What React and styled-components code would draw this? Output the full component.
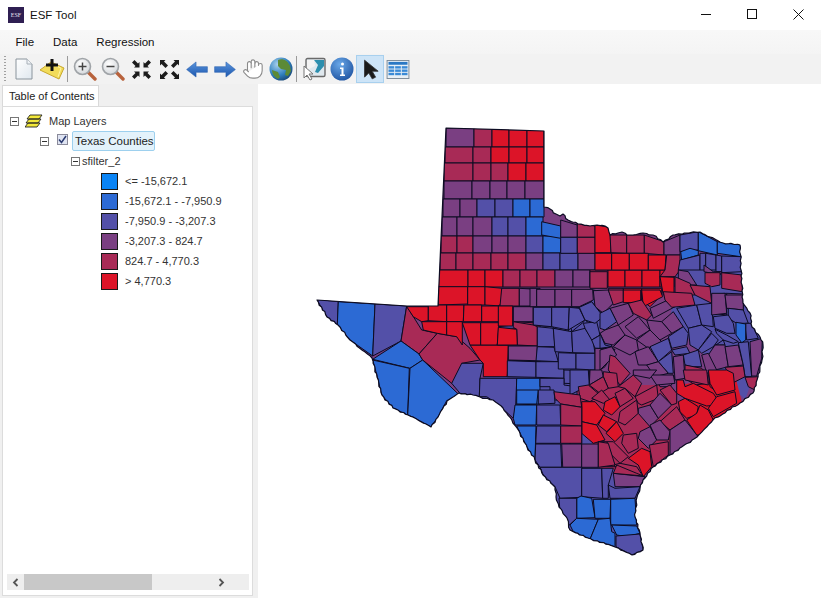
import React from "react";
import styled, { createGlobalStyle } from "styled-components";
import { Hand } from "lucide-react";

const C1 = "#0a84f5";
const C2 = "#2c6ad4";
const C3 = "#5350a8";
const C4 = "#7a3f82";
const C5 = "#a82a56";
const C6 = "#dc1428";

const legend = [
  [C1, "<= -15,672.1"],
  [C2, "-15,672.1 - -7,950.9"],
  [C3, "-7,950.9 - -3,207.3"],
  [C4, "-3,207.3 - 824.7"],
  [C5, "824.7 - 4,770.3"],
  [C6, "> 4,770.3"],
];

const TEXAS_STRAIGHT = "438,306 446,128 544,131 544,207";
const TEXAS_RIVER =
  "544,207 550,209 556,214 560,216 563,214 568,220 578,224 590,226 597,225 605,226 608,228 610,235 618,233 622,232 627,235 633,235 643,233 653,235 663,242 673,235 687,233 700,232 710,237 723,243 740,245 741,270 743,303 750,313 752,327 760,337 763,345 762,360 757,380 753,393 740,403 713,420 697,437 670,455 653,467 645,478 643,480 637,497 635,517 640,533 643,550 632,555 615,547 588,538 570,530 567,518 559,507 556,497 555,487 543,475 535,460 527,447 517,428 503,408 493,400 480,397 473,395 459,393 447,401 438,417 431,427 418,420 408,415 393,408 382,395 377,377 372,358 350,340 338,325 327,317 317,300";

// small deterministic wobble, the river and coast edges aren't smooth in the map
function roughen(str) {
  const pts = str.split(" ").map((p) => p.split(",").map(Number));
  const out = [];
  let n = 0;
  for (let i = 0; i < pts.length - 1; i++) {
    const [x0, y0] = pts[i];
    const [x1, y1] = pts[i + 1];
    const steps = Math.max(1, Math.round(Math.hypot(x1 - x0, y1 - y0) / 3));
    for (let s = 0; s < steps; s++) {
      const t = s / steps;
      n++;
      const w = s === 0 ? 0 : ((n * 7) % 5) / 3 - 0.65;
      const v = s === 0 ? 0 : ((n * 11) % 7) / 5 - 0.6;
      out.push(`${(x0 + (x1 - x0) * t + w).toFixed(1)},${(y0 + (y1 - y0) * t + v).toFixed(1)}`);
    }
  }
  return out.join(" ");
}

const TEXAS = `${TEXAS_STRAIGHT} ${roughen(TEXAS_RIVER)} 317,300 407,306`;

// fills under the counties so small gaps keep the colour of their area
const underlays = [
  [C3, "500,300 600,300 600,400 480,400"],
  [C3, "680,255 745,255 745,300 765,345 745,400 700,350 670,320"],
  [C3, "505,400 640,400 650,560 560,530"],
  [C5, "575,385 660,385 700,420 650,470 600,470"],
  [C6, "680,385 735,375 742,403 700,430"],
];

// straight county rows: top y, bottom y, column edges, colours
const rows = [
  [128, 147, [446, 474, 492, 509, 527, 544], [C4, C5, C6, C6, C6]],
  [147, 163, [445, 473, 491, 509, 527, 544], [C5, C5, C6, C6, C6]],
  [163, 181, [444, 473, 491, 508, 526, 544], [C5, C5, C5, C6, C6]],
  [181, 199, [444, 472, 490, 507, 525, 544], [C4, C4, C4, C4, C4]],
  [199, 217, [443, 460, 477, 495, 513, 530, 544], [C4, C4, C3, C3, C2, C2]],
  [217, 236, [442, 457, 473, 492, 508, 526, 543], [C4, C4, C4, C3, C3, C2]],
  [236, 253, [441, 457, 473, 492, 508, 526, 543, 561, 577, 595], [C5, C5, C4, C4, C4, C3, C2, C3, C5]],
  [253, 270, [440, 456, 473, 491, 508, 526, 543, 560, 578, 595], [C5, C5, C5, C5, C5, C4, C3, C3, C4]],
  [270, 287, [438, 468, 485, 503, 520, 537, 555, 573, 590, 608, 625, 642, 660, 674], [C6, C6, C6, C5, C5, C5, C4, C4, C5, C6, C6, C6, C6]],
];

// counties traced from the map, coords given in a 3x crop with origin ox, oy
const zones = [
  {
    ox: 300,
    oy: 280,
    polys: [
      [C3, "50,58 115,65 112,135 80,110"],
      [C2, "115,65 225,72 218,228 150,180 112,135"],
      [C3, "225,72 320,78 303,183 218,228"],
      [C5, "320,78 365,150 412,160 357,222 303,183"],
      [C2, "303,183 357,222 368,240 330,265 218,238"],
      [C2, "218,240 328,265 323,405 280,385 245,345 232,290"],
      [C2, "330,265 368,240 478,345 440,362 415,410 392,440 355,420 323,405"],
      [C5, "412,160 470,170 510,205 540,240 485,250 480,285 455,310 368,240 357,222"],
      [C3, "485,250 550,250 540,295 538,350 480,340 455,310"],
      [C3, "540,295 650,295 648,375 640,415 590,370 560,350 538,350"],
      [C2, "650,295 720,295 720,372 648,375"],
      [C6, "510,195 625,195 622,290 550,290 550,250 540,240"],
      [C6, "415,20 503,20 503,72 415,75"],
      [C6, "503,20 555,20 555,75 503,75"],
      [C6, "555,20 607,25 605,78 555,75"],
      [C5, "607,25 660,25 660,78 605,78"],
      [C4, "660,25 720,25 720,80 660,78"],
      [C6, "320,80 385,80 385,122 365,125 340,110"],
      [C6, "385,75 440,75 440,125 385,122"],
      [C6, "440,75 492,75 490,125 440,125"],
      [C6, "492,75 545,75 545,125 490,125"],
      [C6, "545,78 597,78 597,125 545,125"],
      [C6, "597,75 640,75 638,135 597,140"],
      [C4, "640,80 700,80 700,125 640,125"],
      [C6, "365,125 440,125 440,165 412,160 370,150"],
      [C6, "440,125 487,125 487,195 470,170 440,165"],
      [C6, "487,128 542,128 542,195 510,195"],
      [C6, "542,128 597,128 592,195 542,195"],
      [C6, "597,145 652,145 652,195 592,195"],
      [C5, "652,125 720,130 720,200 652,195"],
      [C4, "628,198 720,200 720,245 625,240"],
      [C3, "625,243 720,245 720,290 622,290"],
    ],
  },
  {
    ox: 490,
    oy: 270,
    polys: [
      [C5, "35,55 88,55 88,108 30,108"],
      [C4, "88,55 140,58 140,108 88,108"],
      [C4, "140,58 195,60 195,108 140,108"],
      [C4, "195,60 245,60 245,110 195,108"],
      [C4, "245,60 310,60 300,90 265,112 245,110"],
      [C4, "310,60 360,70 365,105 335,125"],
      [C6, "25,108 68,108 68,168 25,168"],
      [C4, "70,110 130,110 130,155 70,155"],
      [C3, "130,110 185,110 185,170 130,165"],
      [C3, "185,110 235,110 235,185 190,175"],
      [C3, "235,112 270,112 282,155 245,185"],
      [C3, "265,115 300,90 335,130 290,155"],
      [C5, "70,155 130,165 142,170 142,228 82,225 80,178 70,172"],
      [C6, "25,172 80,178 82,225 22,225"],
      [C4, "55,228 142,228 140,272 55,270"],
      [C3, "52,272 138,275 138,322 52,320"],
      [C3, "142,170 190,175 195,230 142,230"],
      [C3, "142,230 192,232 205,275 138,272"],
      [C3, "138,275 205,275 222,300 222,325 138,322"],
      [C3, "190,175 245,185 248,248 195,245"],
      [C3, "245,185 285,175 310,215 315,250 248,248"],
      [C3, "205,248 258,250 258,297 205,297"],
      [C3, "258,250 315,250 315,300 258,297"],
      [C3, "222,300 298,302 298,343 222,340"],
      [C3, "150,325 222,325 222,345 260,350 262,390 180,390 180,350 150,350"],
      [C3, "280,160 320,155 330,195 305,210 285,175"],
      [C3, "305,210 340,190 370,235 315,235"],
      [C4, "315,235 375,238 345,290 315,310"],
      [C4, "298,302 335,305 320,350 298,343"],
    ],
  },
  {
    ox: 530,
    oy: 220,
    polys: [
      [C2, "35,5 92,18 92,55 35,45"],
      [C4, "92,0 142,15 142,52 92,52"],
      [C5, "142,10 195,18 195,52 142,52"],
      [C3, "92,52 142,52 142,100 92,100"],
      [C5, "142,52 195,52 195,100 142,100"],
      [C6, "195,15 240,22 243,98 195,98"],
      [C5, "240,45 290,45 290,100 243,98"],
      [C5, "290,45 343,45 343,100 290,100"],
      [C5, "343,45 402,65 402,105 343,100"],
      [C4, "402,65 450,45 450,105 402,105"],
      [C3, "450,45 505,35 505,90 450,95"],
      [C2, "505,35 562,65 562,105 505,92"],
      [C2, "562,65 635,75 632,110 562,100"],
      [C2, "452,95 480,85 505,92 505,105 455,120"],
      [C6, "195,100 245,100 245,150 195,150"],
      [C6, "245,100 298,100 298,150 245,150"],
      [C6, "298,100 355,100 355,150 298,150"],
      [C6, "355,105 408,105 405,150 355,150"],
      [C5, "410,105 450,105 450,150 435,170 390,170 405,150"],
      [C3, "450,120 510,105 510,150 445,150"],
      [C3, "510,100 527,100 527,150 510,150"],
      [C3, "527,100 558,105 558,150 527,150"],
      [C3, "558,105 575,108 575,155 558,155"],
      [C3, "575,108 635,110 635,155 575,158"],
      [C4, "445,150 475,155 500,195 480,195 445,175"],
      [C4, "522,135 550,155 575,155 570,165 522,155"],
      [C5, "525,158 570,158 570,195 545,200 525,190"],
      [C5, "575,158 637,165 637,215 575,205"],
      [C5, "435,170 480,190 495,225 435,225"],
      [C5, "480,195 540,200 545,250 495,225"],
      [C4, "545,222 590,220 590,285 548,280"],
      [C4, "590,220 640,222 640,265 590,262"],
      [C6, "390,170 432,172 432,225 400,225"],
      [C5, "235,205 280,205 280,235 250,250"],
      [C6, "280,205 335,205 335,240 285,248"],
      [C6, "335,205 395,205 395,225 360,260 335,240"],
      [C4, "190,212 235,210 250,250 220,280 195,260"],
      [C4, "0,205 20,205 20,260 0,260"],
      [C4, "20,208 75,208 75,260 20,260"],
      [C4, "75,208 125,208 125,260 75,260"],
      [C4, "125,208 188,208 190,240 148,260 125,260"],
      [C5, "180,155 232,155 232,205 180,205"],
      [C3, "10,262 65,262 65,320 10,315"],
      [C3, "65,262 118,262 115,330 65,320"],
      [C3, "118,262 148,265 165,300 115,330"],
      [C3, "148,262 185,245 220,290 195,310 165,300"],
    ],
  },
  {
    ox: 600,
    oy: 290,
    polys: [
      [C5, "25,0 70,0 70,35 40,45"],
      [C4, "30,55 85,40 100,75 55,105"],
      [C3, "0,70 30,55 50,95 15,120 0,115"],
      [C4, "15,120 55,105 75,135 40,165 15,160 0,130"],
      [C4, "75,110 115,80 150,120 110,145"],
      [C4, "40,170 75,135 110,150 115,180 90,195"],
      [C4, "110,150 150,120 185,155 145,175"],
      [C3, "0,130 15,165 35,170 0,175"],
      [C4, "0,180 35,170 50,195 25,215 0,240"],
      [C6, "70,0 122,0 122,38 70,38"],
      [C6, "125,0 180,0 188,20 130,50"],
      [C5, "85,40 125,30 155,75 140,90 100,70"],
      [C4, "150,55 215,25 225,50 160,85"],
      [C4, "185,95 220,65 250,110 215,130"],
      [C4, "140,90 185,95 215,130 180,150 150,120"],
      [C5, "190,5 275,10 285,45 215,52 195,30"],
      [C3, "230,55 290,45 305,105 265,115"],
      [C3, "290,45 335,40 340,110 305,105"],
      [C4, "335,10 375,10 380,70 335,75"],
      [C4, "375,15 430,15 430,60 380,55"],
      [C3, "385,55 430,60 445,100 410,100 385,85"],
      [C3, "340,80 385,75 400,100 405,130 380,130 345,115"],
      [C3, "437,100 455,100 475,145 440,150 437,120"],
      [C3, "345,118 380,135 415,155 400,160 370,150 350,130"],
      [C3, "265,115 305,105 335,125 295,180 270,165"],
      [C3, "205,140 250,110 265,130 260,165 215,175"],
      [C3, "150,170 205,145 215,180 175,215"],
      [C4, "105,185 145,170 175,215 145,225 115,225"],
      [C3, "215,180 260,170 270,190 225,195"],
      [C3, "175,215 215,185 220,250 205,250"],
      [C4, "220,200 250,195 252,225 255,265 225,270"],
      [C3, "250,195 295,180 305,230 275,230 255,225"],
      [C3, "295,180 335,130 355,150 340,170 305,190"],
      [C3, "340,170 370,150 375,165 345,165"],
      [C4, "325,195 345,165 375,165 385,230 345,240"],
      [C4, "375,170 415,165 430,225 385,230"],
      [C3, "415,158 445,155 455,260 435,260 430,225"],
      [C4, "450,155 487,145 485,205 470,258 455,258"],
      [C4, "305,195 325,190 350,240 320,250"],
      [C5, "255,225 305,235 320,250 325,280 285,285 255,265"],
      [C6, "325,250 385,240 400,275 350,305 330,290"],
      [C5, "375,232 430,228 435,260 400,278"],
      [C5, "435,262 475,260 465,300 445,290"],
      [C2, "408,97 437,102 437,150 425,158 408,135"],
      [C4, "140,225 175,215 205,250 165,260"],
      [C4, "165,260 220,255 225,270 210,290 180,290"],
      [C5, "30,195 45,200 90,250 60,285 25,240"],
    ],
  },
  {
    ox: 570,
    oy: 370,
    polys: [
      [C3, "0,0 55,0 58,45 0,75"],
      [C5, "25,50 55,45 90,75 60,95 30,85"],
      [C4, "60,0 95,0 100,20 58,45"],
      [C5, "100,5 140,10 145,50 115,55 100,20"],
      [C5, "58,45 100,20 115,55 90,70"],
      [C5, "65,85 95,60 120,90 100,100"],
      [C6, "105,95 135,80 150,110 125,135 100,120"],
      [C6, "35,95 75,95 105,130 80,165 35,155"],
      [C6, "35,155 80,165 105,210 70,220 35,190"],
      [C6, "85,165 100,135 140,155 110,185"],
      [C6, "108,190 140,155 160,190 135,215"],
      [C5, "135,70 165,55 190,85 150,110"],
      [C5, "145,50 190,15 215,40 195,80 165,55"],
      [C5, "150,125 200,90 205,130 165,165 145,155"],
      [C5, "195,80 260,45 265,85 215,105 205,100"],
      [C4, "205,115 240,105 265,145 240,170 205,130"],
      [C4, "240,105 270,70 305,105 265,145"],
      [C5, "270,60 300,45 320,70 320,100 305,105"],
      [C5, "270,155 320,110 345,150 300,180"],
      [C4, "210,185 240,170 260,210 235,235 205,205"],
      [C4, "240,165 270,150 300,185 295,210 260,210"],
      [C4, "300,180 345,150 385,200 300,255"],
      [C6, "325,95 345,85 385,110 380,135 350,145 330,125"],
      [C6, "380,130 390,105 415,120 430,150 410,195 380,195 350,150"],
      [C6, "320,30 340,30 345,50 370,40 430,70 440,85 440,105 410,108 345,85 320,70"],
      [C6, "415,0 470,0 490,10 495,60 440,75 420,40"],
      [C6, "440,80 495,65 500,100 430,140 415,115"],
      [C5, "160,195 200,190 205,235 175,250 155,220"],
      [C5, "110,215 130,215 175,260 150,280 125,255"],
      [C6, "175,265 215,235 240,245 245,290 220,320 205,285"],
      [C5, "238,225 295,215 295,255 250,290"],
      [C5, "130,285 150,280 200,290 220,320 170,315"],
      [C5, "85,215 110,215 125,260 135,290 85,290"],
      [C5, "0,100 35,100 35,170 0,170"],
      [C4, "0,170 35,170 35,225 0,225"],
      [C5, "340,0 410,0 415,45 345,30"],
      [C4, "240,15 310,15 315,40 260,45"],
      [C4, "190,0 260,0 240,25 190,15"],
    ],
  },
  {
    ox: 480,
    oy: 390,
    polys: [
      [C2, "110,0 175,0 170,42 110,42"],
      [C2, "105,45 170,45 168,105 105,105 100,85"],
      [C2, "110,108 168,108 165,210 140,170"],
      [C3, "175,0 222,0 225,40 175,42"],
      [C3, "170,45 240,45 242,105 170,105"],
      [C3, "170,108 242,108 242,160 167,160"],
      [C3, "167,162 242,162 245,232 180,232 165,210"],
      [C5, "222,5 300,15 305,52 242,42 225,25"],
      [C5, "242,42 305,52 305,108 242,105"],
      [C5, "242,108 305,108 305,160 242,160"],
      [C4, "245,162 305,162 305,232 248,232"],
      [C4, "305,162 355,162 355,232 305,232"],
      [C5, "355,155 385,160 405,225 355,232"],
      [C3, "180,232 305,232 305,322 240,325 225,290 190,255"],
      [C3, "305,235 365,235 368,325 305,320"],
      [C3, "365,235 400,235 385,285 385,325 368,325"],
      [C4, "400,250 495,260 480,290 405,290"],
      [C3, "385,285 405,295 480,290 465,325 390,325"],
      [C5, "410,225 470,250 490,258 400,250"],
      [C2, "303,318 335,325 345,383 290,385 290,325"],
      [C2, "340,328 392,328 390,385 345,385"],
      [C2, "392,328 465,325 470,405 392,405"],
      [C3, "237,325 290,325 290,385 268,405 240,365"],
      [C2, "270,405 290,385 355,388 330,448 280,425"],
      [C2, "355,388 390,385 395,425 405,430 405,470 330,448"],
      [C2, "395,405 470,408 480,430 440,440 410,435"],
      [C3, "408,438 480,432 490,480 455,495 408,470"],
    ],
  },
];

function rowPolys() {
  const out = [];
  rows.forEach(([y0, y1, xs, cols]) => {
    cols.forEach((c, i) => {
      out.push([c, `${xs[i]},${y0} ${xs[i + 1]},${y0} ${xs[i + 1]},${y1} ${xs[i]},${y1}`]);
    });
  });
  return out;
}

function zonePolys() {
  const out = [];
  zones.forEach(({ ox, oy, polys }) => {
    polys.forEach(([c, pts]) => {
      const real = pts
        .split(" ")
        .map((p) => {
          const [x, y] = p.split(",").map(Number);
          return `${(ox + x / 3).toFixed(1)},${(oy + y / 3).toFixed(1)}`;
        })
        .join(" ");
      out.push([c, real]);
    });
  });
  return out;
}

const counties = [...rowPolys(), ...zonePolys()];

const GlobalStyle = createGlobalStyle`
  html, body {
    margin: 0;
    height: 100%;
    background: #fff;
    overflow: hidden;
  }
  body {
    font-family: "Liberation Sans", Arial, sans-serif;
    font-size: 11px;
    color: #222;
  }
`;

const Win = styled.div`
  width: 821px;
  height: 598px;
  display: flex;
  flex-direction: column;
  background: #fff;
`;

const TitleBar = styled.div`
  height: 30px;
  display: flex;
  align-items: center;
  padding-left: 8px;
  background: #fff;
`;

const AppIcon = styled.span`
  width: 16px;
  height: 16px;
  margin-top: -1px;
  background: #2f1f52;
  color: #e8e0f0;
  font-family: "Liberation Serif", serif;
  font-size: 6px;
  line-height: 16px;
  text-align: center;
`;

const Title = styled.span`
  margin-left: 6px;
  margin-top: -1px;
  font-size: 11.5px;
  color: #111;
`;

const WinControls = styled.div`
  margin-left: auto;
  display: flex;
`;

const WinBtn = styled.div`
  width: 46px;
  height: 30px;
  display: flex;
  align-items: center;
  justify-content: center;
  margin-top: -2px;
`;

const MenuBar = styled.div`
  height: 24px;
  display: flex;
  align-items: center;
  padding-left: 6px;
  background: linear-gradient(#f8f8f8, #f4f4f4);
`;

const MenuItem = styled.span`
  padding: 0 9.5px;
  font-size: 11.5px;
  color: #111;
`;

const Toolbar = styled.div`
  height: 30px;
  display: flex;
  align-items: center;
  padding-left: 4px;
  background: #f2f2f2;
`;

const Grip = styled.div`
  width: 2px;
  height: 26px;
  margin-right: 4px;
  background: repeating-linear-gradient(#a0a0a0 0 1px, transparent 1px 3px);
`;

const ToolBtn = styled.div`
  width: 28px;
  height: 28px;
  box-sizing: border-box;
  display: flex;
  align-items: center;
  justify-content: center;
  background: ${(p) => (p.$active ? "#cde4f7" : "transparent")};
  border: 1px solid ${(p) => (p.$active ? "#a8d0ee" : "transparent")};
`;

const Sep = styled.div`
  width: 1px;
  height: 26px;
  margin: 0 3px 0 1px;
  background: #9a9a9a;
`;

const Body = styled.div`
  flex: 1;
  min-height: 0;
  display: flex;
`;

const Side = styled.div`
  width: 258px;
  display: flex;
  flex-direction: column;
  background: #f0f0f0;
  padding-bottom: 2px;
  box-sizing: border-box;
`;

const TabStrip = styled.div`
  height: 21px;
  padding-top: 1px;
  padding-left: 2px;
  display: flex;
`;

const Tab = styled.div`
  width: 97px;
  background: #fff;
  border: 1px solid #d9d9d9;
  border-bottom: none;
  box-sizing: border-box;
  padding-left: 6px;
  line-height: 20px;
  font-size: 11px;
  white-space: nowrap;
  color: #222;
`;

const TabBody = styled.div`
  flex: 1;
  margin: 0 5px 0 2px;
  background: #fff;
  border: 1px solid #dcdcdc;
  display: flex;
  flex-direction: column;
  padding-top: 4px;
`;

const Tree = styled.div`
  flex: 1;
`;

const Row = styled.div`
  height: 20px;
  display: flex;
  align-items: center;
  padding-left: ${(p) => p.$indent}px;
  font-size: 11px;
  color: #333;
`;

const Expander = styled.span`
  width: 9px;
  height: 9px;
  box-sizing: border-box;
  border: 1px solid #777;
  background: #fff;
  position: relative;
  margin-right: ${(p) => p.$gap}px;
  &::after {
    content: "";
    position: absolute;
    left: 1px;
    right: 1px;
    top: 3px;
    height: 1px;
    background: #333;
  }
`;

const LayersLabel = styled.span`
  margin-left: 6px;
`;

const Check = styled.span`
  width: 11px;
  height: 11px;
  box-sizing: border-box;
  border: 1px solid #8a8a9a;
  background: #dfe4f2;
  display: flex;
  align-items: center;
  justify-content: center;
  margin-right: 4px;
  margin-top: -4px;
`;

const Selected = styled.span`
  height: 20px;
  width: 83px;
  line-height: 19px;
  box-sizing: border-box;
  padding-left: 2px;
  white-space: nowrap;
  background: #e3f2fb;
  border: 1px solid #9dd0ee;
  border-radius: 2px;
  color: #222;
  font-size: 11.5px;
`;

const Swatch = styled.span`
  width: 17px;
  height: 17px;
  box-sizing: border-box;
  border: 1px solid #1a1a1a;
  background: ${(p) => p.$color};
  margin-right: 7px;
`;

const HScroll = styled.div`
  height: 16px;
  margin: 0 3px 5px 4px;
  background: #eeeeee;
  display: flex;
  align-items: center;
`;

const ScrollArrow = styled.span`
  width: 17px;
  display: flex;
  justify-content: center;
`;

const Thumb = styled.span`
  width: 128px;
  height: 16px;
  background: #c8c8c8;
`;

const ScrollGap = styled.span`
  flex: 1;
`;

const ScrollEnd = styled.span`
  width: 19px;
`;

const MapPane = styled.div`
  flex: 1;
  background: #fff;
  padding: 36px 0 0 52px;
`;

const MapSvg = styled.svg`
  display: block;
`;

const DocIcon = () => (
  <svg width="18" height="22" viewBox="0 0 18 22">
    <defs>
      <linearGradient id="dg" x1="0" y1="0" x2="1" y2="1">
        <stop offset="0" stopColor="#fff" />
        <stop offset="1" stopColor="#dfe7ee" />
      </linearGradient>
    </defs>
    <path d="M1 1h11l5 5v15H1z" fill="url(#dg)" stroke="#8a949c" />
    <path d="M12 1v5h5" fill="#eef2f6" stroke="#a8b0b8" />
  </svg>
);

const AddIcon = () => (
  <svg width="26" height="22" viewBox="0 0 26 22">
    <path d="M1 12 12 4l13 6-5 11z" fill="#f2dc5a" stroke="#c9a92e" />
    <path d="M12 6 22 10l-3 9" fill="none" stroke="#fff3a0" />
    <path d="M13 1v12M7 7h12" stroke="#111" strokeWidth="3" />
  </svg>
);

const MagIcon = ({ plus }) => (
  <svg width="24" height="24" viewBox="0 0 24 24">
    <defs>
      <radialGradient id="mg" cx="0.4" cy="0.35" r="0.7">
        <stop offset="0" stopColor="#fff" />
        <stop offset="1" stopColor="#d2d6da" />
      </radialGradient>
    </defs>
    <path d="M14 14 22 22" stroke="#b8623c" strokeWidth="3.4" strokeLinecap="round" />
    <circle cx="9.5" cy="9.5" r="8" fill="url(#mg)" stroke="#a0a4a8" strokeWidth="1.6" />
    <path d="M5.5 9.5h8" stroke="#444" strokeWidth="1.5" />
    {plus && <path d="M9.5 5.5v8" stroke="#444" strokeWidth="1.5" />}
  </svg>
);

const ExtentIcon = ({ out }) => {
  // one thin arrow for the top left corner, turned for the other three
  const head = out
    ? "M1 1h5.5L5 2.5 9 6.5 6.500 9 2.500 5 1 6.500z"
    : "M8.500 8.500H3L4.500 7 1 3.500 3.500 1 7 4.500 8.500 3z";
  return (
    <svg width="21" height="21" viewBox="0 0 21 21">
      {[
        [0, 0, 0],
        [21, 0, 90],
        [21, 21, 180],
        [0, 21, 270],
      ].map(([x, y, r]) => (
        <path key={r} d={head} fill="#1c1c1c" transform={`translate(${x} ${y}) rotate(${r})`} />
      ))}
    </svg>
  );
};

const ArrowIcon = ({ flip }) => (
  <svg width="24" height="17" viewBox="0 0 24 18">
    <defs>
      <linearGradient id="ag" x1="0" y1="0" x2="0" y2="1">
        <stop offset="0" stopColor="#5b95dd" />
        <stop offset="1" stopColor="#1b56ae" />
      </linearGradient>
    </defs>
    <path
      d="M1 9 11 1v5h12v6H11v5z"
      fill="url(#ag)"
      stroke="#2a62b0"
      strokeWidth="0.6"
      transform={flip ? "translate(24 0) scale(-1 1)" : undefined}
    />
  </svg>
);

const GlobeIcon = () => (
  <svg width="24" height="24" viewBox="0 0 24 24">
    <defs>
      <radialGradient id="gg" cx="0.35" cy="0.3" r="0.8">
        <stop offset="0" stopColor="#a8d0ee" />
        <stop offset="0.6" stopColor="#2f7fbe" />
        <stop offset="1" stopColor="#15406e" />
      </radialGradient>
    </defs>
    <circle cx="12" cy="12" r="11.5" fill="url(#gg)" />
    <path d="M9 3c5-2 10 1 12 6l1 5-3 5-3-1 1-5-5-1-3-3zM3 13l6 2 2 5-2 2c-4-2-6-5-6-9z" fill="#5c8a36" />
  </svg>
);

const IdMapIcon = () => (
  <svg width="24" height="24" viewBox="0 0 24 24">
    <rect x="4" y="1.500" width="19" height="18" rx="1.500" fill="#dfe8ee" stroke="#6a6a6a" strokeWidth="1.4" />
    <path d="M12 3 22 3v6l-6 7-3-1 3-7z" fill="#2c8fae" />
    <path d="M5 3l7 0 1 6-8 4z" fill="#f3f3f3" />
    <path d="M2 9v12l3-3 3 5 2-1-3-5h4z" fill="#fff" stroke="#777" strokeWidth="1" />
  </svg>
);

const InfoIcon = () => (
  <svg width="24" height="24" viewBox="0 0 24 24">
    <defs>
      <radialGradient id="ig" cx="0.4" cy="0.3" r="0.8">
        <stop offset="0" stopColor="#6aa8e8" />
        <stop offset="1" stopColor="#1a4f9e" />
      </radialGradient>
    </defs>
    <circle cx="12" cy="12" r="11.5" fill="url(#ig)" />
    <circle cx="12.500" cy="7" r="1.500" fill="#fff" />
    <path d="M10 10.500h3.500v7H15V19h-5v-1.500h1.500v-5.500H10z" fill="#fff" />
  </svg>
);

const PointerIcon = () => (
  <svg width="17" height="21" viewBox="0 0 20 24">
    <path d="M3 1v20l5-5 4 7 4-2-4-7h7z" fill="#1a1a1a" stroke="#333" />
  </svg>
);

const TableIcon = () => (
  <svg width="24" height="19" viewBox="0 0 24 20">
    <rect x="0.500" y="0.500" width="23" height="19" fill="#e8f0f6" stroke="#7a8a98" />
    <rect x="2" y="2" width="20" height="3" fill="#2a78c4" />
    {[6.500, 10, 13.500].map((y) =>
      [2, 9, 16].map((x) => <rect key={`${x}-${y}`} x={x} y={y} width="6" height="2.500" fill="#3a8ad6" />)
    )}
  </svg>
);

export default function App() {
  return (
    <>
      <GlobalStyle />
      <Win>
        <TitleBar>
          <AppIcon>ESF</AppIcon>
          <Title>ESF Tool</Title>
          <WinControls>
            <WinBtn>
              <svg width="11" height="11" viewBox="0 0 11 11">
                <path d="M0 5.500h10" stroke="#111" />
              </svg>
            </WinBtn>
            <WinBtn>
              <svg width="11" height="11" viewBox="0 0 11 11">
                <rect x="0.500" y="0.500" width="9" height="9" fill="none" stroke="#111" />
              </svg>
            </WinBtn>
            <WinBtn>
              <svg width="11" height="11" viewBox="0 0 11 11">
                <path d="M0.500 0.500l10 10M10.500 0.500l-10 10" stroke="#111" />
              </svg>
            </WinBtn>
          </WinControls>
        </TitleBar>
        <MenuBar>
          <MenuItem>File</MenuItem>
          <MenuItem>Data</MenuItem>
          <MenuItem>Regression</MenuItem>
        </MenuBar>
        <Toolbar>
          <Grip />
          <ToolBtn><DocIcon /></ToolBtn>
          <ToolBtn><AddIcon /></ToolBtn>
          <Sep />
          <ToolBtn><MagIcon plus /></ToolBtn>
          <ToolBtn><MagIcon /></ToolBtn>
          <ToolBtn><ExtentIcon /></ToolBtn>
          <ToolBtn><ExtentIcon out /></ToolBtn>
          <ToolBtn><ArrowIcon /></ToolBtn>
          <ToolBtn><ArrowIcon flip /></ToolBtn>
          <ToolBtn><Hand size={22} color="#8a8a8a" fill="#fff" strokeWidth={1.2} /></ToolBtn>
          <ToolBtn><GlobeIcon /></ToolBtn>
          <Sep />
          <ToolBtn><IdMapIcon /></ToolBtn>
          <ToolBtn><InfoIcon /></ToolBtn>
          <ToolBtn $active><PointerIcon /></ToolBtn>
          <ToolBtn><TableIcon /></ToolBtn>
        </Toolbar>
        <Body>
          <Side>
            <TabStrip>
              <Tab>Table of Contents</Tab>
            </TabStrip>
            <TabBody>
              <Tree>
                <Row $indent={7}>
                  <Expander $gap={6} />
                  <svg width="18" height="14" viewBox="0 0 18 14">
                    <path d="M5 1h12l-3 4H2zM4 5h12l-3 4H1zM3 9h12l-3 4H0z" fill="#f2e83a" stroke="#222" strokeWidth="0.9" />
                  </svg>
                  <LayersLabel>Map Layers</LayersLabel>
                </Row>
                <Row $indent={37}>
                  <Expander $gap={8} />
                  <Check>
                    <svg width="9" height="9" viewBox="0 0 9 9">
                      <path d="M1 4.500 3.500 7.500 8 1" fill="none" stroke="#2a3a70" strokeWidth="1.500" />
                    </svg>
                  </Check>
                  <Selected>Texas Counties</Selected>
                </Row>
                <Row $indent={68}>
                  <Expander $gap={2} />
                  <span>sfilter_2</span>
                </Row>
                {legend.map(([color, label]) => (
                  <Row key={label} $indent={98}>
                    <Swatch $color={color} />
                    <span>{label}</span>
                  </Row>
                ))}
              </Tree>
              <HScroll>
                <ScrollArrow>
                  <svg width="7" height="9" viewBox="0 0 7 9">
                    <path d="M5.500 1 2 4.500 5.500 8" fill="none" stroke="#555" strokeWidth="1.800" />
                  </svg>
                </ScrollArrow>
                <Thumb />
                <ScrollGap />
                <ScrollArrow>
                  <svg width="7" height="9" viewBox="0 0 7 9">
                    <path d="M1.500 1 5 4.500 1.500 8" fill="none" stroke="#555" strokeWidth="1.800" />
                  </svg>
                </ScrollArrow>
                <ScrollEnd />
              </HScroll>
            </TabBody>
          </Side>
          <MapPane>
            <MapSvg width="460" height="440" viewBox="310 120 460 440">
              <defs>
                <clipPath id="tx">
                  <polygon points={TEXAS} />
                </clipPath>
              </defs>
              <polygon points={TEXAS} fill={C4} />
              <g clipPath="url(#tx)">
                {underlays.map(([c, pts], i) => (
                  <polygon key={i} points={pts} fill={c} />
                ))}
              </g>
              <g clipPath="url(#tx)" stroke="#0c0c22" strokeWidth="1" strokeLinejoin="round">
                {counties.map(([c, pts], i) => (
                  <polygon key={i} points={pts} fill={c} />
                ))}
              </g>
              <polygon points={TEXAS} fill="none" stroke="#0c0c22" strokeWidth="1.2" strokeLinejoin="round" />
            </MapSvg>
          </MapPane>
        </Body>
      </Win>
    </>
  );
}
